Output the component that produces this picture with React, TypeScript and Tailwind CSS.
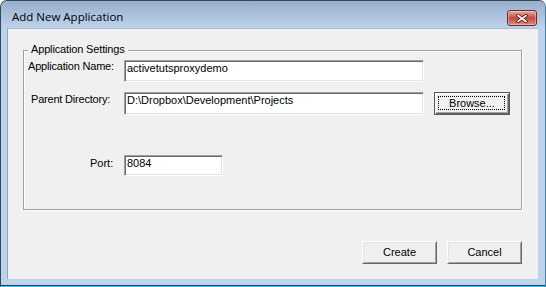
import React from "react";

const sys = { fontFamily: '"Liberation Sans", Arial, sans-serif' };

function Sunken({ w, h, value }: { w: string; h: string; value: string }) {
  return (
    <div
      className={`${w} ${h} bg-white border border-t-[#a0a0a0] border-l-[#a0a0a0] border-r-white border-b-white shadow-[inset_1px_1px_0_#696969,inset_-1px_-1px_0_#e3e3e3] pl-[2px] pt-[1px] text-[11px] leading-[13px] text-black whitespace-nowrap overflow-hidden`}
    >
      {value}
    </div>
  );
}

function Btn({ label, def }: { label: string; def?: boolean }) {
  if (def) {
    return (
      <div className="relative w-[76px] h-[23px] border border-[#555] bg-[#f0f0f0] shadow-[inset_1px_1px_0_#ffffff,inset_-1px_-1px_0_#696969,inset_-2px_-2px_0_#a0a0a0] flex items-center justify-center text-[11px] leading-[13px] text-black">
        <div className="absolute left-[3px] top-[3px] right-[4px] bottom-[4px] border border-dotted border-black" />
        <span className="relative">{label}</span>
      </div>
    );
  }
  return (
    <div className="w-[75px] h-[23px] border border-t-white border-l-white border-r-[#696969] border-b-[#696969] bg-[#f0f0f0] shadow-[inset_1px_1px_0_#e3e3e3,inset_-1px_-1px_0_#a0a0a0] flex items-center justify-center text-[11px] leading-[13px] text-black">
      {label}
    </div>
  );
}

export default function App() {
  return (
    <div
      className="w-[546px] h-[287px] flex flex-col bg-[#bcd3ec] border border-t-[#3a4656] border-l-[#3a4656] border-r-[#3f7fa6] border-b-[#3fc6e8] rounded-t-[7px] shadow-[inset_0_-1px_0_#2e3a48] overflow-hidden"
      style={sys}
    >
      {/* Title bar */}
      <div className="h-[27px] shrink-0 flex items-start justify-between pl-[11px] pr-[8px] bg-linear-to-b from-[#98afcb] to-[#bdd3ec] rounded-t-[6px]">
        <div
          className="pt-[8px] text-[11.5px] leading-[15px] text-black"
          style={{ fontFamily: '"Segoe UI", "Open Sans", "Noto Sans", sans-serif' }}
        >
          Add New Application
        </div>
        <div className="mt-[9px] w-[30px] h-[16px] rounded-[3px] border border-[#6e2b24] bg-linear-to-b from-[#e4aca3] via-[#c5473b] to-[#d98b7f] shadow-[inset_0_0_0_1px_rgba(255,255,255,0.35)] flex items-center justify-center">
          <svg width="12" height="9" viewBox="0 0 12 9">
            <path d="M2 1.5 L10 7.5 M10 1.5 L2 7.5" stroke="#4a1a16" strokeWidth="3.2" strokeLinecap="square" />
            <path d="M2 1.5 L10 7.5 M10 1.5 L2 7.5" stroke="#ffffff" strokeWidth="1.6" strokeLinecap="square" />
          </svg>
        </div>
      </div>

      {/* Frame + client */}
      <div className="flex-1 flex pl-[6px] pr-[7px] pb-[7px]">
        <div className="flex-1 flex flex-col bg-[#f0f0f0] border-l border-t border-l-[#8fa6c2] border-t-[#a9bdd6] pl-[15px] pr-[15px] pt-[21px]">
          {/* Group box */}
          <div className="relative w-[499px] h-[160px] border border-[#a0a0a0] shadow-[inset_1px_1px_0_#ffffff,1px_1px_0_#ffffff]">
            <span className="absolute left-[4px] top-[-8px] px-[3px] bg-[#f0f0f0] text-[11px] leading-[13px] tracking-[-0.15px] text-black whitespace-nowrap">
              Application Settings
            </span>

            <div className="flex flex-col">
              {/* Row 1 */}
              <div className="flex items-start mt-[9px]">
                <div className="w-[100px] pl-[4px] text-[11px] leading-[13px] tracking-[-0.2px] text-black whitespace-nowrap">
                  Application Name:
                </div>
                <Sunken w="w-[300px]" h="h-[22px]" value="activetutsproxydemo" />
              </div>

              {/* Row 2 */}
              <div className="flex items-start mt-[10px]">
                <div className="w-[100px] pl-[7px] pt-[1px] text-[11px] leading-[13px] tracking-[-0.2px] text-black whitespace-nowrap">
                  Parent Directory:
                </div>
                <Sunken w="w-[300px]" h="h-[23px]" value="D:\Dropbox\Development\Projects" />
                <div className="ml-[10px]">
                  <Btn label="Browse..." def />
                </div>
              </div>

              {/* Row 3 */}
              <div className="flex items-start mt-[40px]">
                <div className="w-[100px] pl-[66px] pt-[2px] text-[11px] leading-[13px] text-black whitespace-nowrap">
                  Port:
                </div>
                <Sunken w="w-[99px]" h="h-[21px]" value="8084" />
              </div>
            </div>
          </div>

          {/* Buttons */}
          <div className="flex justify-end gap-[10px] mt-[31px] pr-[1px]">
            <Btn label="Create" />
            <Btn label="Cancel" />
          </div>
        </div>
      </div>
    </div>
  );
}
